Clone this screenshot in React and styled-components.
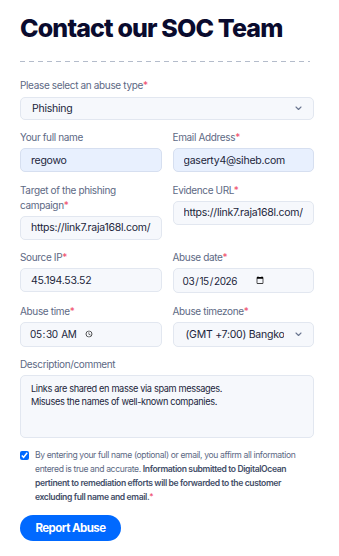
import React from 'react';
import styled, { createGlobalStyle } from 'styled-components';

const GlobalStyle = createGlobalStyle`
  * { box-sizing: border-box; }
  body {
    margin: 0;
    background: #fff;
    font-family: Inter, "Noto Sans", sans-serif;
  }
`;

const Page = styled.div`
  padding: 10px 25px 16px 20px;
`;

const Title = styled.h1`
  margin: 0;
  font-size: 25px;
  line-height: 36px;
  font-weight: 800;
  letter-spacing: -0.85px;
  color: #0a0b2e;
`;

const Divider = styled.div`
  height: 1px;
  margin: 15px 4px 16px 0;
  background: repeating-linear-gradient(90deg, #b4bccb 0 5px, transparent 5px 9px);
`;

const Form = styled.form`
  display: grid;
  grid-template-columns: 1fr 1fr;
  column-gap: 11px;
  row-gap: 10.4px;
  align-items: start;
`;

const Field = styled.div`
  display: flex;
  flex-direction: column;
  gap: 3px;
  grid-column: ${({ wide }) => (wide ? '1 / -1' : 'auto')};
`;

const Label = styled.label`
  font-size: 10px;
  line-height: 15px;
  letter-spacing: -0.35px;
  color: #5d6984;
`;

const Req = styled.span`
  color: #ef4d6b;
`;

const inputBase = `
  width: 100%;
  height: 24px;
  padding: 0 10px;
  border: 1px solid #e2e7f0;
  border-radius: 5px;
  background: #f6f8fc;
  font-family: Inter, "Noto Sans", sans-serif;
  font-size: 10.5px;
  letter-spacing: -0.25px;
  color: #1b1f3b;
  outline: none;
`;

const Input = styled.input`
  ${inputBase}
  background: ${({ filled }) => (filled ? '#e8f0fe' : '#f6f8fc')};
  border-color: ${({ filled }) => (filled ? '#d6dff0' : '#e2e7f0')};
  height: ${({ tall }) => (tall ? '25px' : '24px')};
  padding-left: ${({ tall }) => (tall ? '8px' : '10px')};

  &::-webkit-datetime-edit {
    flex: 0 0 auto;
    padding: 0;
    font-size: 10px;
    letter-spacing: -0.4px;
  }
  &::-webkit-datetime-edit-fields-wrapper {
    padding: 0;
  }
  &::-webkit-calendar-picker-indicator {
    margin-inline-start: ${({ gap }) => gap || 0}px;
    padding: 0;
    width: 8px;
    height: 9px;
  }
`;

const SelectWrap = styled.div`
  position: relative;
`;

const Select = styled.select`
  ${inputBase}
  appearance: none;
  -webkit-appearance: none;
  height: ${({ tall }) => (tall ? '25px' : '23px')};
  padding: 0 ${({ tall }) => (tall ? '29px' : '24px')} 0 ${({ tall }) => (tall ? '12px' : '11px')};
  text-overflow: clip;
  white-space: nowrap;
`;

const Chevron = styled.svg`
  position: absolute;
  right: 12px;
  top: 50%;
  width: 7px;
  height: 5px;
  margin-top: -2px;
  pointer-events: none;
`;

const TextArea = styled.textarea`
  ${inputBase}
  height: 63px;
  padding: 6px 10px;
  font: 400 9.2px/13px Inter, "Noto Sans", sans-serif;
  letter-spacing: -0.35px;
  resize: none;
`;

const Consent = styled.div`
  grid-column: 1 / -1;
  display: flex;
  gap: 6px;
  align-items: flex-start;
`;

const Check = styled.input`
  width: 9px;
  height: 9px;
  margin: 3px 0 0 0;
  flex-shrink: 0;
  accent-color: #0069ff;
`;

const ConsentText = styled.p`
  margin: 0;
  font-size: 8.6px;
  line-height: 14px;
  letter-spacing: -0.38px;
  color: #5d6984;
  strong { font-weight: 600; color: #434e68; }
`;

const Submit = styled.button`
  grid-column: 1 / -1;
  justify-self: start;
  height: 26px;
  width: 101px;
  padding: 0;
  border: none;
  border-radius: 13px;
  background: #0069ff;
  color: #fff;
  font-family: Inter, "Noto Sans", sans-serif;
  font-size: 11.5px;
  letter-spacing: -0.55px;
  font-weight: 700;
  cursor: pointer;
`;

const ChevronIcon = () => (
  <Chevron viewBox="0 0 7 5" fill="none">
    <path d="M1 1l2.5 2.5L6 1" stroke="#6b7690" strokeWidth="1.1" strokeLinecap="round" strokeLinejoin="round" />
  </Chevron>
);

export default function App() {
  return (
    <>
      <GlobalStyle />
      <Page>
        <Title>Contact our SOC Team</Title>
        <Divider />
        <Form onSubmit={(e) => e.preventDefault()}>
          <Field wide>
            <Label>Please select an abuse type<Req>*</Req></Label>
            <SelectWrap>
              <Select defaultValue="phishing">
                <option value="phishing">Phishing</option>
                <option value="spam">Spam</option>
                <option value="malware">Malware</option>
              </Select>
              <ChevronIcon />
            </SelectWrap>
          </Field>
          <Field>
            <Label>Your full name</Label>
            <Input filled defaultValue="regowo" />
          </Field>
          <Field>
            <Label>Email Address<Req>*</Req></Label>
            <Input filled defaultValue="gaserty4@siheb.com" />
          </Field>
          <Field>
            <Label>Target of the phishing campaign<Req>*</Req></Label>
            <Input defaultValue="https://link7.raja168l.com/" />
          </Field>
          <Field>
            <Label>Evidence URL<Req>*</Req></Label>
            <Input defaultValue="https://link7.raja168l.com/" />
          </Field>
          <Field>
            <Label>Source IP<Req>*</Req></Label>
            <Input defaultValue="45.194.53.52" />
          </Field>
          <Field>
            <Label>Abuse date<Req>*</Req></Label>
            <Input tall gap={0} type="date" defaultValue="2026-03-15" />
          </Field>
          <Field>
            <Label>Abuse time<Req>*</Req></Label>
            <Input tall gap={7} type="time" defaultValue="05:30" />
          </Field>
          <Field>
            <Label>Abuse timezone<Req>*</Req></Label>
            <SelectWrap>
              <Select tall defaultValue="bkk">
                <option value="bkk">(GMT +7:00) Bangkok, Hanoi, Jakarta</option>
              </Select>
              <ChevronIcon />
            </SelectWrap>
          </Field>
          <Field wide>
            <Label>Description/comment</Label>
            <TextArea defaultValue={'Links are shared en masse via spam messages.\nMisuses the names of well-known companies.'} />
          </Field>
          <Consent>
            <Check type="checkbox" defaultChecked />
            <ConsentText>
              By entering your full name (optional) or email, you affirm all information
              entered is true and accurate. <strong>Information submitted to DigitalOcean
              pertinent to remediation efforts will be forwarded to the customer
              excluding full name and email.</strong><Req>*</Req>
            </ConsentText>
          </Consent>
          <Submit type="submit">Report Abuse</Submit>
        </Form>
      </Page>
    </>
  );
}
